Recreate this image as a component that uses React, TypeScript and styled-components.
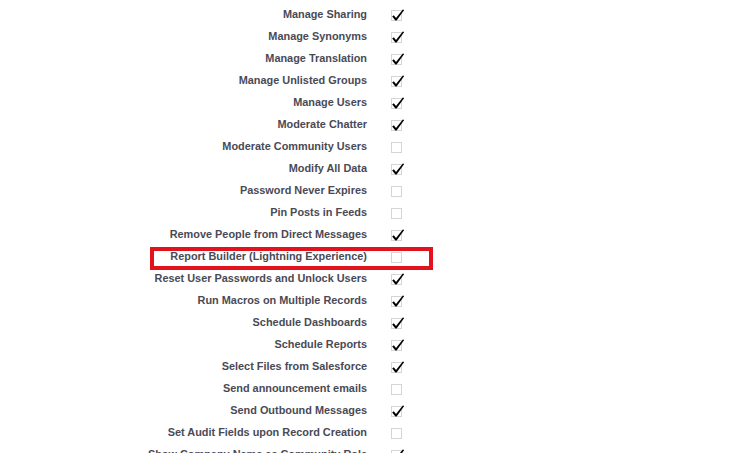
import React from "react";
import styled, { createGlobalStyle } from "styled-components";

const Global = createGlobalStyle`
  html, body { margin: 0; padding: 0; background: #ffffff; overflow: hidden; }
  body { font-family: "Liberation Sans", Arial, sans-serif; }
`;

const Page = styled.div`
  width: 747px;
  height: 453px;
  overflow: hidden;
  background: #ffffff;
`;

const List = styled.div`
  display: flex;
  flex-direction: column;
  margin-top: -19px;
`;

const Row = styled.div`
  position: relative;
  display: grid;
  grid-template-columns: 367px 1fr;
  height: 22px;
  align-items: center;
`;

const Label = styled.div`
  text-align: right;
  font-family: "Liberation Sans", Arial, sans-serif;
  font-weight: bold;
  font-size: 10.9px;
  color: #4a4a56;
  white-space: nowrap;
  line-height: 14px;
`;

const BoxCell = styled.div`
  padding-left: 24px;
  display: flex;
  align-items: center;
  height: 22px;
`;

const Highlight = styled.div`
  position: absolute;
  left: 150px;
  top: 2px;
  width: 283px;
  height: 23px;
  box-sizing: border-box;
  border: 4px solid #e2131c;
  pointer-events: none;
`;

const CheckSvg = styled.svg`
  display: block;
  margin-top: 2px;
  overflow: visible;
`;

const CheckBox: React.FC<{ checked: boolean }> = ({ checked }) => (
  <CheckSvg width="14" height="13" viewBox="0 0 14 13">
    <rect
      x="0.5"
      y="1.5"
      width="10"
      height="10"
      fill="none"
      stroke="#aaaaaa"
      strokeWidth="1"
      strokeDasharray="1 1"
    />
    {checked && (
      <path
        d="M1.2 7.4 L2.8 6.3 L5 9 L11.8 0.4 L13.2 1 L5.6 11.6 L4.4 11.6 Z"
        fill="#000000"
      />
    )}
  </CheckSvg>
);

type Perm = { label: string; checked: boolean; highlight?: boolean };

const perms: Perm[] = [
  { label: "", checked: false },
  { label: "Manage Sharing", checked: true },
  { label: "Manage Synonyms", checked: true },
  { label: "Manage Translation", checked: true },
  { label: "Manage Unlisted Groups", checked: true },
  { label: "Manage Users", checked: true },
  { label: "Moderate Chatter", checked: true },
  { label: "Moderate Community Users", checked: false },
  { label: "Modify All Data", checked: true },
  { label: "Password Never Expires", checked: false },
  { label: "Pin Posts in Feeds", checked: false },
  { label: "Remove People from Direct Messages", checked: true },
  { label: "Report Builder (Lightning Experience)", checked: false, highlight: true },
  { label: "Reset User Passwords and Unlock Users", checked: true },
  { label: "Run Macros on Multiple Records", checked: true },
  { label: "Schedule Dashboards", checked: true },
  { label: "Schedule Reports", checked: true },
  { label: "Select Files from Salesforce", checked: true },
  { label: "Send announcement emails", checked: false },
  { label: "Send Outbound Messages", checked: true },
  { label: "Set Audit Fields upon Record Creation", checked: false },
  { label: "Show Company Name as Community Role", checked: true },
];

export default function App() {
  return (
    <Page>
      <Global />
      <List>
        {perms.map((p, i) => (
          <Row key={i}>
            <Label>{p.label}</Label>
            <BoxCell>
              <CheckBox checked={p.checked} />
            </BoxCell>
            {p.highlight && <Highlight />}
          </Row>
        ))}
      </List>
    </Page>
  );
}
